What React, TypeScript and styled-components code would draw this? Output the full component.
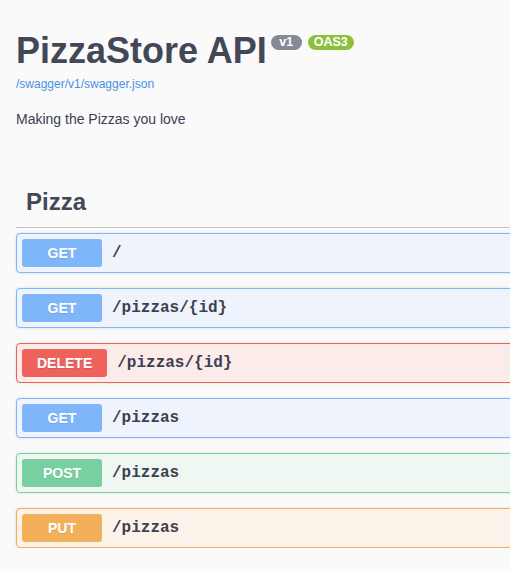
import React from "react";
import styled, { createGlobalStyle } from "styled-components";

const GlobalStyle = createGlobalStyle`
  html, body {
    margin: 0;
    padding: 0;
    background: #fafafa;
    overflow: hidden;
  }
  body {
    font-family: "Liberation Sans", Arial, sans-serif;
    color: #3b4151;
  }
`;

const Page = styled.div`
  width: 700px;
  padding: 0 0 0 16px;
  box-sizing: border-box;
`;

const Info = styled.div`
  padding-top: 31px;
`;

const TitleRow = styled.div`
  display: flex;
  align-items: flex-start;
`;

const Title = styled.h2`
  margin: 0;
  font-size: 36px;
  line-height: 40px;
  font-weight: 700;
  color: #434857;
`;

const Badges = styled.div`
  display: flex;
  gap: 6px;
  margin: 4px 0 0 4px;
`;

const Badge = styled.span<{ $bg: string }>`
  display: inline-block;
  min-width: 31px;
  box-sizing: border-box;
  text-align: center;
  background: ${(p) => p.$bg};
  color: #fff;
  font-size: 12.5px;
  font-weight: 700;
  line-height: 15px;
  padding: 0 6px;
  border-radius: 57px;
`;

const SpecLink = styled.a`
  display: block;
  margin-top: 6px;
  font-size: 12px;
  line-height: 14px;
  color: #4990e2;
  text-decoration: none;
`;

const Description = styled.p`
  margin: 20px 0 0;
  font-size: 14px;
  line-height: 16px;
  color: #3b4151;
`;

const TagHeader = styled.h3`
  margin: 52px 0 5px;
  padding: 9px 20px 11px 10px;
  font-size: 24px;
  line-height: 28px;
  font-weight: 700;
  color: #434857;
  border-bottom: 1px solid rgba(59, 65, 81, 0.3);
`;

const OpList = styled.div`
  display: flex;
  flex-direction: column;
  gap: 15px;
`;

const methodColors: Record<string, { main: string; bg: string }> = {
  GET: { main: "#7fb6fa", bg: "#eff4fc" },
  DELETE: { main: "#ee625c", bg: "#fbecea" },
  POST: { main: "#78cf9f", bg: "#eef7f1" },
  PUT: { main: "#f3b05b", bg: "#fbf3ea" },
};

const OpBlock = styled.div<{ $method: string }>`
  display: flex;
  align-items: center;
  padding: 5px;
  border: 1px solid ${(p) => methodColors[p.$method].main};
  background: ${(p) => methodColors[p.$method].bg};
  border-radius: 4px;
  box-shadow: 0 0 3px rgba(0, 0, 0, 0.12);
`;

const Method = styled.span<{ $method: string }>`
  min-width: 80px;
  box-sizing: border-box;
  padding: 6px 15px;
  font-size: 14px;
  line-height: 16px;
  font-weight: 700;
  text-align: center;
  color: #fff;
  border-radius: 3px;
  background: ${(p) => methodColors[p.$method].main};
  text-shadow: 0 1px 0 rgba(0, 0, 0, 0.1);
`;

const Path = styled.span`
  padding: 0 10px;
  font-family: "Liberation Mono", "Courier New", monospace;
  font-size: 16px;
  font-weight: 700;
  color: #3b4151;
`;

const ops = [
  { method: "GET", path: "/" },
  { method: "GET", path: "/pizzas/{id}" },
  { method: "DELETE", path: "/pizzas/{id}" },
  { method: "GET", path: "/pizzas" },
  { method: "POST", path: "/pizzas" },
  { method: "PUT", path: "/pizzas" },
];

export default function App() {
  return (
    <>
      <GlobalStyle />
      <Page>
        <Info>
          <TitleRow>
            <Title>PizzaStore API</Title>
            <Badges>
              <Badge $bg="#858a96">v1</Badge>
              <Badge $bg="#8dc13d">OAS3</Badge>
            </Badges>
          </TitleRow>
          <SpecLink href="#">/swagger/v1/swagger.json</SpecLink>
          <Description>Making the Pizzas you love</Description>
        </Info>
        <TagHeader>Pizza</TagHeader>
        <OpList>
          {ops.map((op, i) => (
            <OpBlock key={i} $method={op.method}>
              <Method $method={op.method}>{op.method}</Method>
              <Path>{op.path}</Path>
            </OpBlock>
          ))}
        </OpList>
      </Page>
    </>
  );
}
